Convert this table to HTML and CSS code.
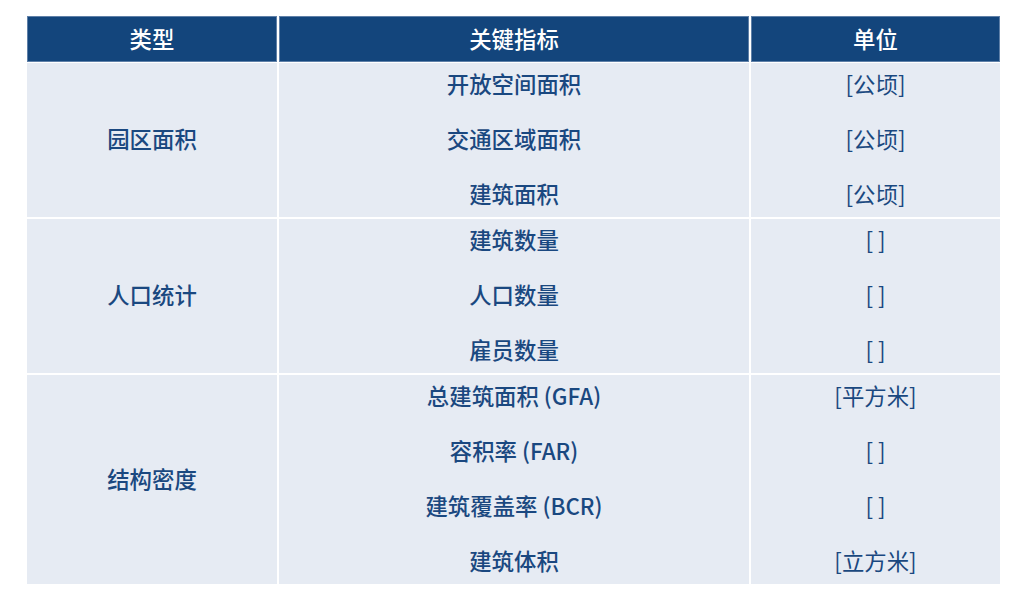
FILE: index.html
```html
<!DOCTYPE html>
<html lang="zh">
<head>
<meta charset="utf-8">
<link rel="stylesheet" href="styles.css">
</head>
<body>
<div class="tbl">
  <div class="head">
    <div class="hc">类型</div>
    <div class="hc">关键指标</div>
    <div class="hc">单位</div>
  </div>
  <div class="group">
    <div class="cell type">园区面积</div>
    <div class="cell col ind">
      <div class="line">开放空间面积</div>
      <div class="line">交通区域面积</div>
      <div class="line">建筑面积</div>
    </div>
    <div class="cell col unit">
      <div class="line">[公顷]</div>
      <div class="line">[公顷]</div>
      <div class="line">[公顷]</div>
    </div>
  </div>
  <div class="group">
    <div class="cell type">人口统计</div>
    <div class="cell col ind">
      <div class="line">建筑数量</div>
      <div class="line">人口数量</div>
      <div class="line">雇员数量</div>
    </div>
    <div class="cell col unit">
      <div class="line">[ ]</div>
      <div class="line">[ ]</div>
      <div class="line">[ ]</div>
    </div>
  </div>
  <div class="group">
    <div class="cell type">结构密度</div>
    <div class="cell col ind">
      <div class="line">总建筑面积 (GFA)</div>
      <div class="line">容积率 (FAR)</div>
      <div class="line">建筑覆盖率 (BCR)</div>
      <div class="line">建筑体积</div>
    </div>
    <div class="cell col unit">
      <div class="line">[平方米]</div>
      <div class="line">[ ]</div>
      <div class="line">[ ]</div>
      <div class="line">[立方米]</div>
    </div>
  </div>
</div>
</body>
</html>
```

FILE: styles.css
```css
html, body {
  margin: 0;
  padding: 0;
  background: #ffffff;
}
body {
  font-family: "Noto Sans CJK SC", "Noto Sans", sans-serif;
  font-size: 22.4px;
  color: #1a4880;
}
.tbl {
  width: 973px;
  margin: 16px 0 0 27px;
  display: flex;
  flex-direction: column;
  gap: 2px;
}
.head {
  display: grid;
  grid-template-columns: 250px 470px 249px;
  gap: 2px;
  height: 46px;
  margin-bottom: -1px;
}
.hc {
  background: #13457c;
  box-shadow: inset 0 0 0 1px #5f80a8;
  color: #ffffff;
  font-weight: 500;
  display: flex;
  align-items: center;
  justify-content: center;
  padding-bottom: 2px;
  box-sizing: border-box;
}
.group {
  display: grid;
  grid-template-columns: 250px 470px 249px;
  gap: 2px;
}
.cell {
  background: #e6ebf3;
}
.type {
  display: flex;
  align-items: center;
  justify-content: center;
  font-weight: 500;
  padding-bottom: 4px;
  box-sizing: border-box;
}
.col {
  display: flex;
  flex-direction: column;
  gap: 11px;
}
.line {
  height: 44px;
  display: flex;
  align-items: center;
  justify-content: center;
  white-space: pre;
  padding-bottom: 4px;
  box-sizing: border-box;
}
.ind {
  font-weight: 500;
}
.unit {
  font-weight: 400;
}
```
